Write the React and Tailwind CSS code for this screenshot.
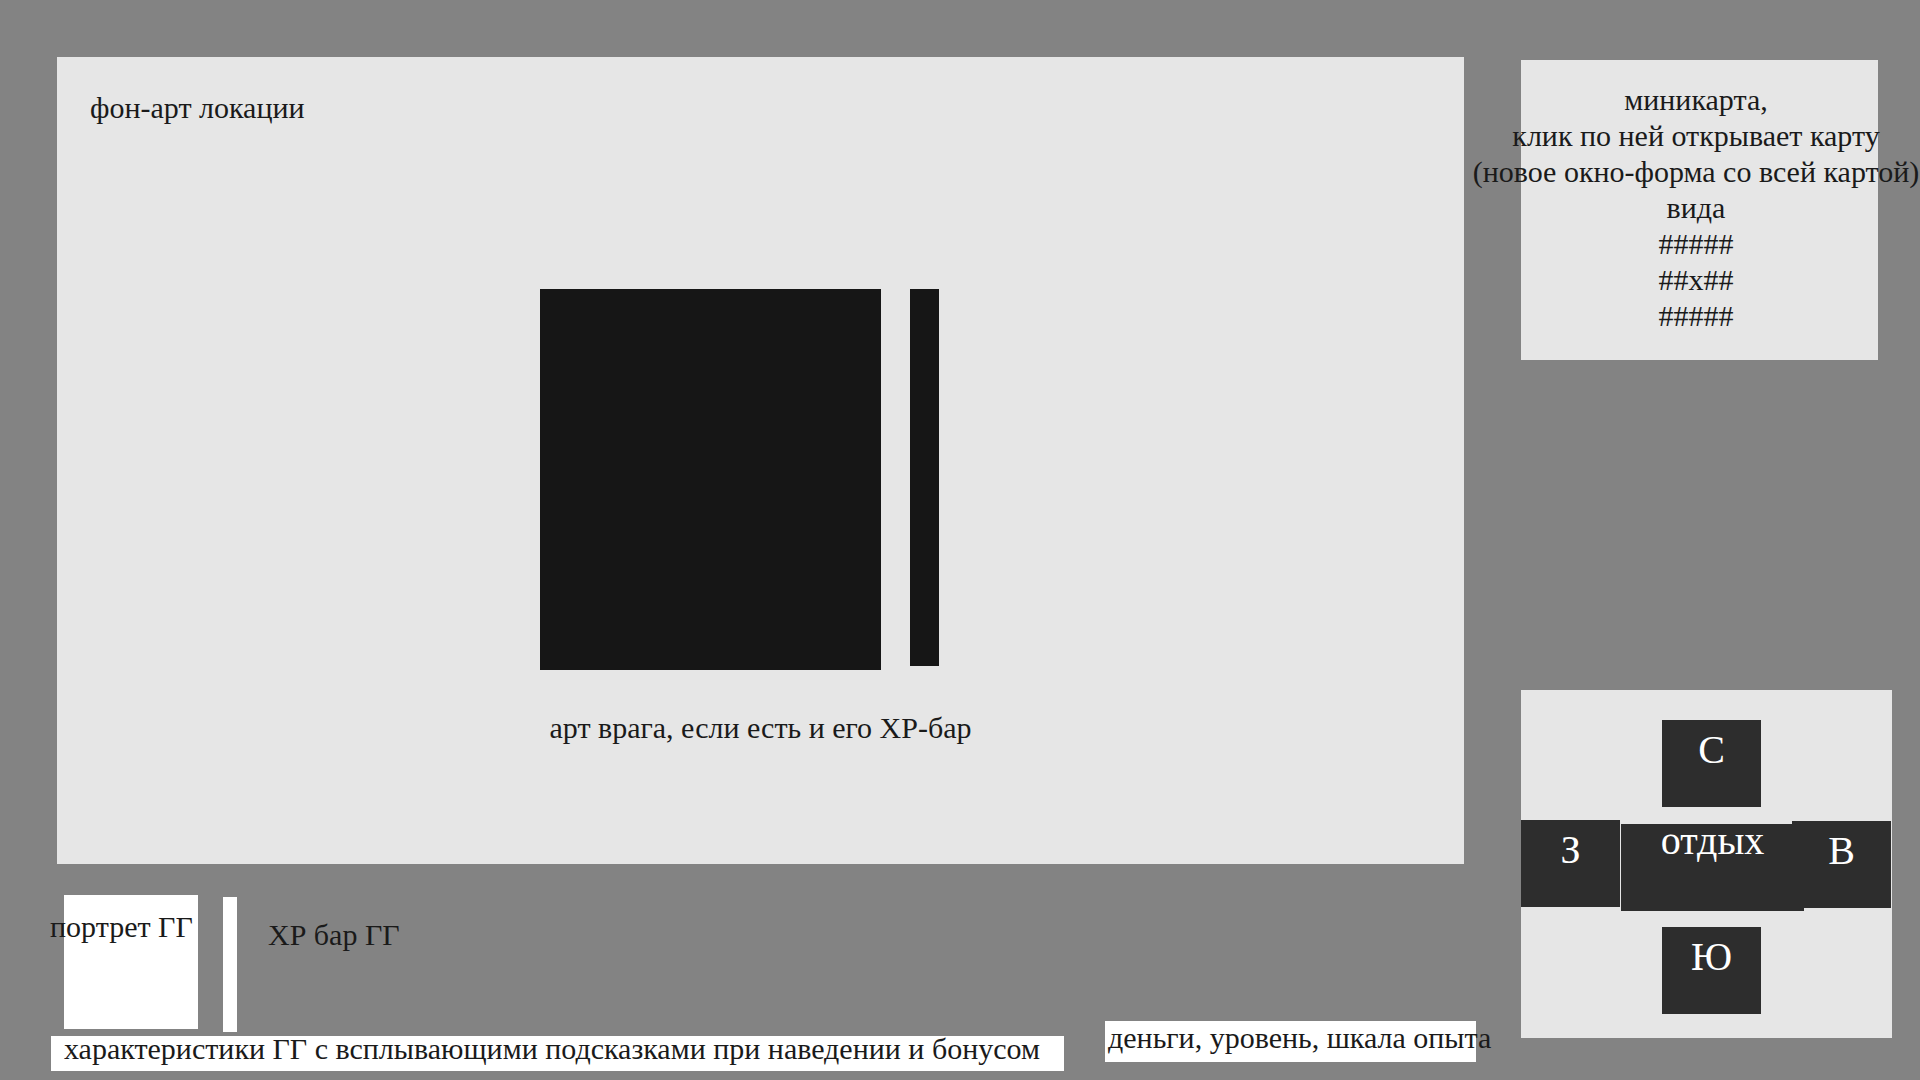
import React from 'react';

const serif = { fontFamily: '"Liberation Serif", "Times New Roman", serif' };

const DirButton = ({ label, className }) => (
  <div className={`w-[99px] h-[87px] bg-[#2d2d2d] text-white text-[40px] leading-none text-center pt-[10px] ${className || ''}`}>
    {label}
  </div>
);

const App = () => {
  return (
    <div
      className="w-[1920px] h-[1080px] overflow-hidden bg-[#838383] text-[#1a1a1a] text-[30px] flex pl-[50px]"
      style={serif}
    >
      {/* left column: location, hero, stats */}
      <div className="w-[1471px] shrink-0 pt-[57px] flex flex-col">
        {/* location background art */}
        <div className="ml-[7px] w-[1407px] h-[807px] bg-[#e6e6e6] flex flex-col">
          <div className="pt-[34px] pl-[33px] leading-[33px] whitespace-nowrap">фон-арт локации</div>
          <div className="mt-[165px] ml-[483px] flex items-start">
            <div className="w-[341px] h-[381px] bg-[#161616]" />
            <div className="ml-[29px] w-[29px] h-[377px] bg-[#161616]" />
          </div>
          <div className="mt-[41px] leading-[33px] text-center whitespace-nowrap">
            арт врага, если есть и его ХР-бар
          </div>
        </div>

        {/* hero portrait + hp bar */}
        <div className="mt-[31px] h-[126px] flex items-start">
          <div className="relative ml-[14px] w-[134px] h-[134px] bg-white shrink-0">
            <span className="absolute left-[-14px] top-[9px] whitespace-nowrap">портрет ГГ</span>
          </div>
          <div className="ml-[25px] mt-[2px] w-[14px] h-[135px] bg-white shrink-0" />
          <div className="ml-[31px] mt-[17px] whitespace-nowrap">ХР бар ГГ</div>
        </div>

        {/* stats + money */}
        <div className="flex items-start">
          <div className="ml-[1px] mt-[15px] w-[1013px] h-[35px] bg-white pl-[13px] leading-[26px] whitespace-nowrap">
            характеристики ГГ с всплывающими подсказками при наведении и бонусом
          </div>
          <div className="ml-[41px] w-[371px] h-[41px] bg-white pl-[3px] leading-[34px] whitespace-nowrap">
            деньги, уровень, шкала опыта
          </div>
        </div>
      </div>

      {/* right column: minimap + movement pad */}
      <div className="w-[371px] shrink-0 pt-[60px] flex flex-col">
        <div className="w-[357px] h-[300px] bg-[#e6e6e6] pt-[22px] pr-[7px] flex flex-col items-center leading-[36px] whitespace-nowrap">
          <div>миникарта,</div>
          <div>клик по ней открывает карту</div>
          <div>(новое окно-форма со всей картой)</div>
          <div>вида</div>
          <div>#####</div>
          <div>##x##</div>
          <div>#####</div>
        </div>

        <div className="mt-[330px] w-[371px] h-[348px] bg-[#e6e6e6] flex flex-col">
          <DirButton label="С" className="ml-[141px] mt-[30px]" />
          <div className="mt-[13px] flex items-start">
            <DirButton label="З" />
            <div className="ml-[1px] mt-[4px] w-[183px] h-[87px] bg-[#2d2d2d] text-white text-[40px] leading-[33px] text-center">
              отдых
            </div>
            <DirButton label="В" className="ml-[-12px] mt-[1px]" />
          </div>
          <DirButton label="Ю" className="ml-[141px] mt-[16px]" />
        </div>
      </div>
    </div>
  );
};

export default App;
